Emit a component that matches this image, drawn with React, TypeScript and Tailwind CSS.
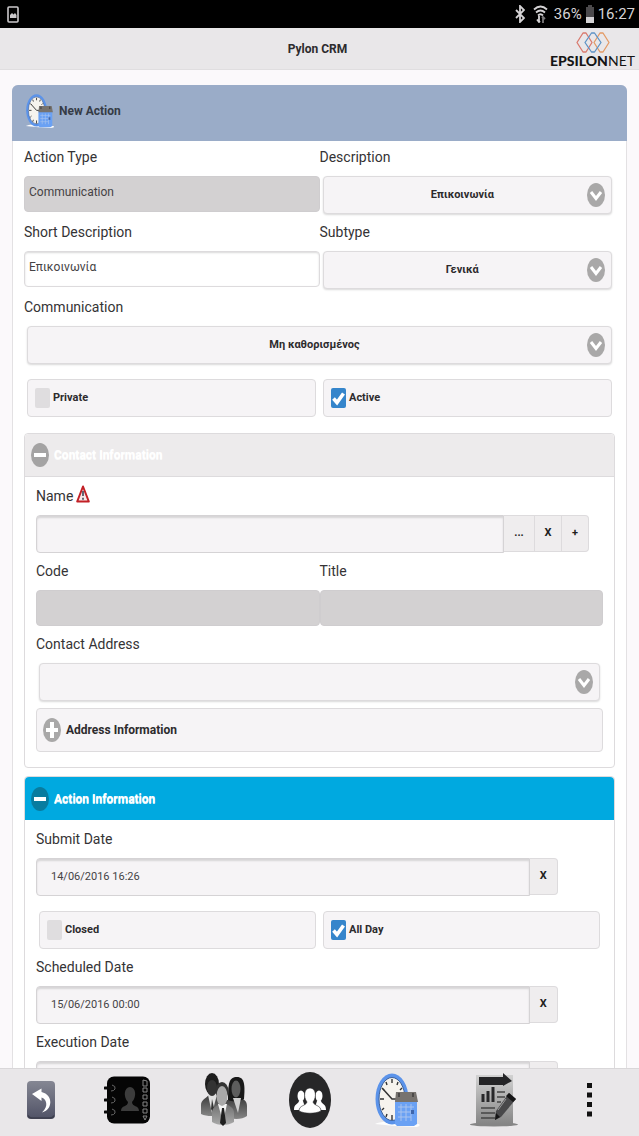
import { useId } from "react";
import type { ReactNode } from "react";

function ChevronBadge() {
  return (
    <svg viewBox="0 0 18 24" className="pointer-events-none absolute right-[7px] top-1/2 h-6 w-[18px] -translate-y-1/2">
      <ellipse cx="9" cy="12" rx="9" ry="12" fill="#a9a8a8" />
      <path d="M4 9 9 15.500 14 9" fill="none" stroke="#fff" strokeWidth="3" />
    </svg>
  );
}

function ToggleBadge({ open, fill }: { open: boolean; fill: string }) {
  return (
    <svg viewBox="0 0 18 24" className="h-6 w-[18px] shrink-0">
      <ellipse cx="9" cy="12" rx="9" ry="12" fill={fill} />
      <path d={open ? "M3 12h12" : "M3 12h12M9 4v16"} stroke="#fff" strokeWidth="4" />
    </svg>
  );
}

function WarningIcon() {
  return (
    <svg viewBox="0 0 14 18" className="mb-1 h-[18px] w-3.5">
      <path d="M7 1.500 12.800 16.500H1.200Z" fill="#f7e9e9" stroke="#c22026" strokeWidth="2" strokeLinejoin="round" />
      <path d="M7 6v5M7 12.800v2" stroke="#3c4658" strokeWidth="1.600" />
    </svg>
  );
}

function ClockIcon({ className }: { className: string }) {
  return (
    <svg viewBox="0 0 45 54" className={className}>
      <path d="M0 51c6-3 14-2 20-1l24 1c2 2-1 3-4 3l-20-1Z" fill="#fdfdfd" />
      <ellipse cx="17" cy="26" rx="16.5" ry="25.5" fill="#5b93ea" />
      <ellipse cx="17" cy="26" rx="13" ry="21.5" fill="#f6f3ee" stroke="#3f6299" strokeWidth="1" />
      <path
        d="M17 6v4M17 42v5M5 26h4M25 26h4M11 9l1 3M23 9l-1 3M7 15l2 2M27 15l-2 2M7 37l2-2M11 44l1-3M23 44l-1-3"
        stroke="#333"
        strokeWidth="1.4"
      />
      <path d="M8 16l9 10h5" fill="none" stroke="#333" strokeWidth="1.5" />
      <path d="M20 27h22v24l-3 2H22l-2-2Z" fill="#6aa1f4" />
      <path d="M21 19h20l2 10H20Z" fill="#77736f" />
      <path d="M24 20v4M38 20v4" stroke="#4c4a49" strokeWidth="2" />
      <path d="M23 34h16M23 39h16M23 44h13M26 31v17M31 31v17M36 31v17" stroke="#a9c3ee" strokeWidth="1" />
      <path d="M36 37h3v4h-3z" fill="#3e66ac" />
    </svg>
  );
}

function BackIcon() {
  return (
    <svg viewBox="0 0 28 38" className="h-[38px] w-7">
      <defs>
        <linearGradient id="back-fill" x1="0" y1="0" x2="0" y2="1">
          <stop offset="0" stopColor="#858793" />
          <stop offset="1" stopColor="#505266" />
        </linearGradient>
      </defs>
      <rect width="28" height="38" rx="4" fill="url(#back-fill)" />
      <path d="M1 34.500q1 2.500 4 2.500h18q3 0 4-2.500" fill="none" stroke="#3c3e4c" strokeWidth="1.500" />
      <path d="M5 13 14.500 7.500V11c6 1.500 9 5.500 8.800 10.500-.3 5-3 8.500-8.300 10 3.500-3.500 4.700-6.500 4.200-9.500-.5-3-2-4.700-4.700-5.500V20Z" fill="#fff" />
    </svg>
  );
}

function ContactBookIcon() {
  return (
    <svg viewBox="0 0 46 48" className="h-12 w-[46px]">
      <rect x="3" y="0.500" width="43" height="47" rx="7" fill="#050505" />
      <path d="M1 12h6M1 24h6M1 36h6" stroke="#0a0a0a" strokeWidth="3" strokeLinecap="round" />
      <path d="M8 9q4 1 3 4-1 2-4 2M8 21q4 1 3 4-1 2-4 2M8 33q4 1 3 4-1 2-4 2" fill="none" stroke="#666" strokeWidth="1" />
      <path d="M17 35c0-6 7-4 7-9-5-5-4-15 2-15s7 10 2 15c0 5 7 3 7 9Z" fill="#3c3c3c" />
      <path d="M39 4l4 1v5h-4zM39 12h4v4h-4zM39 19h4v4h-4zM39 26h4v4h-4zM39 33h4v4h-4zM39 40h4l-2 4z" fill="none" stroke="#858585" strokeWidth="1" />
    </svg>
  );
}

function PeopleIcon() {
  return (
    <svg viewBox="0 0 47 53" className="h-[53px] w-[47px]">
      <defs>
        <linearGradient id="suit-fill" x1="0" y1="0" x2="0" y2="1">
          <stop offset="0" stopColor="#3a3a3a" />
          <stop offset="1" stopColor="#858585" />
        </linearGradient>
        <linearGradient id="front-fill" x1="0" y1="0" x2="0" y2="1">
          <stop offset="0" stopColor="#6d6d6d" />
          <stop offset="1" stopColor="#a9a9a9" />
        </linearGradient>
      </defs>
      <path d="M1 41V32c0-5 5-7 8-10h6l7 6v14c-6 1-15 2-21-1Z" fill="url(#suit-fill)" />
      <path d="M8 22l4 18 5-18Z" fill="#e0e0e0" />
      <path d="M12 26l-1 10 2 3 1-4Z" fill="#333" />
      <ellipse cx="12" cy="11" rx="7" ry="11" fill="#1d1d1d" />
      <ellipse cx="12" cy="15" rx="5" ry="8" fill="#333" />
      <path d="M25 43V30c0-3 5-4 8-6h6c5 2 8 4 8 9v10c-5 4-16 4-22 0Z" fill="url(#suit-fill)" />
      <path d="M28 27c0-17 1-23 9-23s8 9 7 22c-5 3-12 3-16 1Z" fill="#191919" />
      <ellipse cx="36" cy="16" rx="4.500" ry="8.500" fill="#5d5d5d" />
      <path d="M33 25l5 15 3-15Z" fill="#cfcfcf" />
      <path d="M12 49V40c0-6 5-7 8-10h5c4 3 9 4 9 10v9c-6 4-16 4-22 0Z" fill="url(#front-fill)" />
      <path d="M18 31l5 18 4-18Z" fill="#f4f4f4" />
      <path d="M22 35h2l2 15-3 3-3-3Z" fill="#1f1f1f" />
      <ellipse cx="22" cy="18" rx="6.500" ry="9" fill="#333" />
      <ellipse cx="22" cy="23" rx="5.500" ry="10" fill="#a9a9a9" />
    </svg>
  );
}

function GroupIcon() {
  return (
    <svg viewBox="0 0 42 56" className="h-14 w-[42px]">
      <ellipse cx="21" cy="28" rx="21" ry="28" fill="#272728" />
      <g fill="#fff">
        <ellipse cx="12" cy="24" rx="3.500" ry="5.500" />
        <ellipse cx="30" cy="24" rx="3.500" ry="5.500" />
        <path d="M5 38c0-7 4-5 5-9h4l3 9ZM37 38c0-7-4-5-5-9h-4l-3 9Z" />
      </g>
      <path
        d="M10 39c0-6 7-5 8-9-4-5-3-14 3-14s7 9 3 14c1 4 8 3 8 9-6 3-16 3-22 0Z"
        fill="#fff"
        stroke="#272728"
        strokeWidth="0.600"
      />
    </svg>
  );
}

function ReportIcon() {
  return (
    <svg viewBox="0 0 48 54" className="h-[54px] w-12">
      <defs>
        <linearGradient id="sheet-fill" x1="0" y1="0" x2="0" y2="1">
          <stop offset="0" stopColor="#d2d2d2" />
          <stop offset="1" stopColor="#858585" />
        </linearGradient>
      </defs>
      <ellipse cx="24" cy="51.500" rx="24" ry="2" fill="#858585" />
      <path d="M6 2h37v49H6Z" fill="url(#sheet-fill)" />
      <path d="M9 4h24V0l9 8-9 5v-1H9Z" fill="#252527" />
      <path d="M13 29v-8M18 29V18M23 29V14" stroke="#28282a" strokeWidth="3" />
      <path d="M27 19h8M27 24h8M27 29h4M11 35h14M11 40h14M11 45h14" stroke="#454545" strokeWidth="1.600" />
      <path d="M39 20l7 6-15 18-6 3 1-9Z" fill="#48484a" />
      <path d="M39 20l7 6-3 3-7-6ZM26 40l4 4-5 3Z" fill="#161617" />
      <path d="M36 26l-8 11" stroke="#999" strokeWidth="1" />
    </svg>
  );
}

function StatusBar() {
  return (
    <div className="flex h-7 shrink-0 items-center justify-between bg-black pl-[7px] pr-1 text-[15px] text-[#d5d3d5]">
      <svg viewBox="0 0 12 17" className="h-[17px] w-3">
        <rect x="1" y="1" width="10" height="15" rx="1" fill="none" stroke="#cbc9cb" strokeWidth="1.600" />
        <path d="M3 12V9l2-2 1.500 1.500L8 7l1.500 2v3Z" fill="#cbc9cb" />
      </svg>
      <div className="flex items-center">
        <svg viewBox="0 0 10 18" className="mr-2 h-[18px] w-2.5" fill="none" stroke="#d5d3d5" strokeWidth="1.800">
          <path d="M1 5l8 8-4 4V1l4 4-8 8" />
        </svg>
        <svg viewBox="0 0 15 18" className="mr-1.5 h-[18px] w-[15px]" fill="none" stroke="#d5d3d5" strokeWidth="1.800">
          <path d="M1 4.500q6.500-6 13 0M3 7.500q4.500-4 9 0M5 10.500q2.500-2.500 5 0" />
          <path d="M6 11v6M4 14.500 6 17l1-1" />
          <path d="M10 18v-6M9 13l1-1 2 2" stroke="#7d7b7d" />
        </svg>
        <span>36%</span>
        <svg viewBox="0 0 8 18" className="mx-1 h-[18px] w-2">
          <path d="M2 0h4v2h2v16H0V2h2Z" fill="#4c4a4c" />
          <path d="M0 12h8v6H0Z" fill="#d5d3d5" />
        </svg>
        <span>16:27</span>
      </div>
    </div>
  );
}

function Logo() {
  return (
    <div className="flex flex-col items-center justify-self-end pt-1">
      <svg viewBox="0 0 34 21" className="h-[21px] w-[34px]" fill="none" strokeWidth="1.300" strokeLinejoin="round">
        <path d="M7 1h3l6 9.500-6 9.500H7L1 10.500Z" stroke="#d9796d" />
        <path d="M24 1h3l6 9.500-6 9.500h-3l-6-9.500Z" stroke="#e39a65" />
        <path d="M15.500 1h3l6.500 9.500-6.500 9.500h-3L9 10.500Z" stroke="#5d93c5" />
      </svg>
      <span className="font-['Lato',sans-serif] text-[14px] leading-4 text-[#151515]">
        <b className="font-black">EPSILON</b>
        <span>NET</span>
      </span>
    </div>
  );
}

const labelClass = "flex items-center gap-[3px] pb-[7px] pt-1 text-[14px] leading-6 text-[#353335]";

function SelectField({ label, options }: { label: string; options: string[] }) {
  const id = useId();
  return (
    <div>
      <label htmlFor={id} className={labelClass}>
        {label}
      </label>
      <div className="relative mx-[3px]">
        <select
          id={id}
          className="block h-[38px] w-full appearance-none rounded border border-[#dddbdd] bg-[#f6f4f6] pl-3 pr-[22px] text-center text-[11px] font-bold text-[#2d2b2d] shadow-[0_1px_2px_rgba(0,0,0,0.15)]"
        >
          {options.map((option) => (
            <option key={option}>{option}</option>
          ))}
        </select>
        <ChevronBadge />
      </div>
    </div>
  );
}

function TextField({ label, value = "", disabled }: { label: string; value?: string; disabled?: boolean }) {
  const id = useId();
  return (
    <div>
      <label htmlFor={id} className={labelClass}>
        {label}
      </label>
      <input
        id={id}
        type="text"
        defaultValue={value}
        disabled={disabled}
        className="block h-9 w-full rounded border border-[#dddbdd] bg-white px-1 pb-1 text-[12px] text-[#454345] shadow-[inset_0_1px_2px_rgba(0,0,0,0.15)] disabled:border-[#cfcdcf] disabled:bg-[#d3d1d2] disabled:shadow-none"
      />
    </div>
  );
}

const addonClass = "border-y border-r border-[#dddbdd] bg-[#efedee] text-[11px] font-bold text-[#1f1f1f]";
const groupInputClass =
  "h-[38px] min-w-0 flex-1 rounded-l border border-[#d5d3d5] bg-[#f6f4f6] px-3.5 pb-0.5 text-[11px] text-[#454345] shadow-[inset_0_2px_2px_rgba(0,0,0,0.13)]";

function NameField() {
  const id = useId();
  return (
    <div>
      <label htmlFor={id} className={labelClass}>
        Name <WarningIcon />
      </label>
      <div className="flex w-[553px] max-w-full items-start">
        <input id={id} type="text" className={groupInputClass} />
        <button type="button" aria-label="Browse" className={`${addonClass} h-[37px] w-[31px]`}>
          ...
        </button>
        <button type="button" aria-label="Clear name" className={`${addonClass} h-[37px] w-[27px]`}>
          X
        </button>
        <button type="button" aria-label="Add" className={`${addonClass} h-[37px] w-[27px] rounded-r`}>
          +
        </button>
      </div>
    </div>
  );
}

function DateField({ label, value }: { label: string; value?: string }) {
  const id = useId();
  return (
    <div>
      <label htmlFor={id} className={labelClass}>
        {label}
      </label>
      <div className="flex w-[92%] items-start">
        <input id={id} type="text" defaultValue={value} className={groupInputClass} />
        <button type="button" aria-label={`Clear ${label}`} className={`${addonClass} h-[37px] w-7 rounded-r`}>
          {value && "X"}
        </button>
      </div>
    </div>
  );
}

function CheckField({ label, checked }: { label: string; checked?: boolean }) {
  return (
    <label className="flex h-[38px] items-center gap-[3px] rounded border border-[#dddbdd] bg-[#f6f4f6] px-[7px] text-[11px] font-bold text-[#2d2b2d]">
      <span className="relative h-5 w-[15px]">
        <input
          type="checkbox"
          defaultChecked={checked}
          className="peer block h-5 w-[15px] appearance-none rounded-xs bg-[#dfdddf] checked:bg-[#3585cb]"
        />
        <svg viewBox="0 0 15 20" className="pointer-events-none absolute inset-0 hidden h-5 w-[15px] peer-checked:block">
          <path d="M2.500 10.500 6 14.500l6.500-9" fill="none" stroke="#fff" strokeWidth="3.600" />
        </svg>
      </span>
      {label}
    </label>
  );
}

function CheckRow({ children }: { children: ReactNode }) {
  return <div className="mx-[3px] mt-[13px] grid grid-cols-2 gap-[7px]">{children}</div>;
}

interface PanelProps {
  title: string;
  active?: boolean;
  children: ReactNode;
}

function Panel({ title, active, children }: PanelProps) {
  return (
    <section className="rounded border border-[#dddbdd]">
      <h2>
        <button
          type="button"
          aria-expanded="true"
          className={
            active
              ? "flex h-[43px] w-full items-center gap-[5px] rounded-t bg-[#00a9e0] px-1.5 text-[12px] font-bold text-white [text-shadow:0_1px_0_#d8f1fa]"
              : "flex h-[43px] w-full items-center gap-[5px] rounded-t border-b border-[#dddbdd] bg-[#edebec] px-1.5 text-[12px] font-bold text-white [text-shadow:0_1px_0_#fafafa]"
          }
        >
          <ToggleBadge open fill={active ? "#087c9f" : "#a4a3a3"} />
          {title}
        </button>
      </h2>
      <div className="flex flex-col gap-0.5 px-[11px] pb-[15px] pt-[3px]">{children}</div>
    </section>
  );
}

function Toolbar() {
  return (
    <nav className="grid h-[68px] shrink-0 grid-cols-[82fr_90fr_102fr_72fr_102fr_92fr_99fr] items-center justify-items-center border-t border-[#d9d7d9] bg-[#e9e7e9] pb-1.5">
      <button type="button" aria-label="Back">
        <BackIcon />
      </button>
      <button type="button" aria-label="Contacts">
        <ContactBookIcon />
      </button>
      <button type="button" aria-label="Customers">
        <PeopleIcon />
      </button>
      <button type="button" aria-label="Groups">
        <GroupIcon />
      </button>
      <button type="button" aria-label="Actions">
        <ClockIcon className="h-[54px] w-[45px]" />
      </button>
      <button type="button" aria-label="Reports">
        <ReportIcon />
      </button>
      <button type="button" aria-label="More">
        <svg viewBox="0 0 5 34" className="h-[34px] w-[5px]">
          <path d="M0 0h5v5H0zM0 9.500h5v5H0zM0 19h5v5H0zM0 28.500h5v5H0z" fill="#111" />
        </svg>
      </button>
    </nav>
  );
}

export default function App() {
  return (
    <div className="flex h-screen flex-col bg-[#fbf9fb] font-['Roboto',sans-serif]">
      <StatusBar />
      <header className="grid h-[42px] shrink-0 grid-cols-[1fr_auto_1fr] items-center border-b border-[#e0dee0] bg-[#e9e7e9] pr-1">
        <h1 className="col-start-2 text-[12px] font-bold text-[#2d2b2d]">Pylon CRM</h1>
        <Logo />
      </header>

      <main className="min-h-0 flex-1 overflow-y-auto px-3 pt-[15px] [scrollbar-width:none]">
        <div className="rounded-md border border-[#e3e1e3] bg-white">
          <div className="-mx-px -mt-px flex h-14 items-center gap-[3px] rounded-t-md bg-[#9aacc8] px-3 pb-1">
            <ClockIcon className="h-[34px] w-8" />
            <h2 className="text-[12px] font-bold text-[#353b45]">New Action</h2>
          </div>

          <form className="flex flex-col gap-0.5 px-[11px] pb-4" onSubmit={(event) => event.preventDefault()}>
            <div className="grid grid-cols-2 gap-y-0.5">
              <TextField label="Action Type" value="Communication" disabled />
              <SelectField label="Description" options={["Επικοινωνία"]} />
              <TextField label="Short Description" value="Επικοινωνία" />
              <SelectField label="Subtype" options={["Γενικά"]} />
            </div>
            <SelectField label="Communication" options={["Μη καθορισμένος"]} />
            <CheckRow>
              <CheckField label="Private" />
              <CheckField label="Active" checked />
            </CheckRow>

            <div className="mt-3.5 flex flex-col gap-2">
              <Panel title="Contact Information">
                <NameField />
                <div className="grid grid-cols-2">
                  <TextField label="Code" disabled />
                  <TextField label="Title" disabled />
                </div>
                <SelectField label="Contact Address" options={[""]} />
                <button
                  type="button"
                  aria-expanded="false"
                  className="mt-[5px] flex h-11 items-center gap-[5px] rounded border border-[#dddbdd] bg-[#f6f4f6] px-1.5 text-[12px] font-bold text-[#2d2b2d]"
                >
                  <ToggleBadge open={false} fill="#a9a8a8" />
                  Address Information
                </button>
              </Panel>

              <Panel title="Action Information" active>
                <DateField label="Submit Date" value="14/06/2016 16:26" />
                <CheckRow>
                  <CheckField label="Closed" />
                  <CheckField label="All Day" checked />
                </CheckRow>
                <DateField label="Scheduled Date" value="15/06/2016 00:00" />
                <DateField label="Execution Date" />
              </Panel>
            </div>
          </form>
        </div>
      </main>

      <Toolbar />
    </div>
  );
}
